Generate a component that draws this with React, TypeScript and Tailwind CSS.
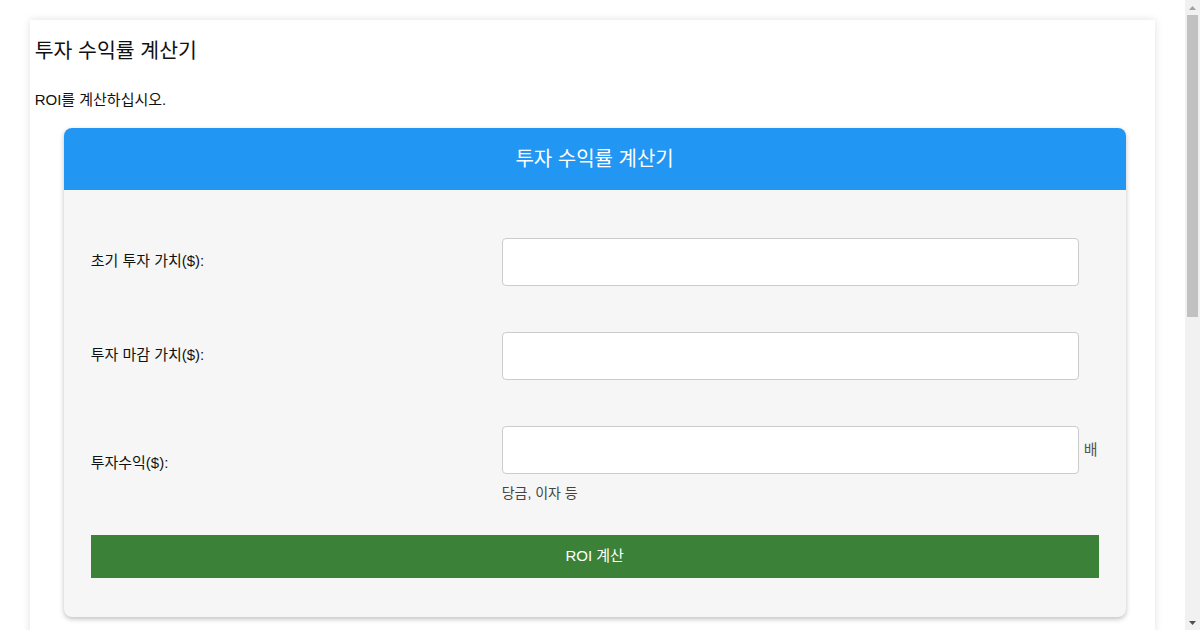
import React from "react";

const font = { fontFamily: '"Liberation Sans", "Noto Sans CJK KR", sans-serif' };

function Row({ label, suffix, help }: { label: string; suffix?: string; help?: string }) {
  return (
    <div className="flex items-center py-[23px]">
      <div className="w-[411px] shrink-0 -mt-[2px] text-[15px] text-[#111]">{label}</div>
      <div className="flex flex-col">
        <div className="flex items-center">
          <input
            type="text"
            className="w-[577px] h-[48px] bg-white border border-[#ccc] rounded-[4px] outline-none px-3"
          />
          {suffix && <span className="ml-[5px] text-[15px] text-[#555]">{suffix}</span>}
        </div>
        {help && <div className="mt-[9px] text-[14px] leading-[20px] text-[#444]">{help}</div>}
      </div>
    </div>
  );
}

function Scrollbar() {
  return (
    <div className="fixed right-0 top-0 w-[15px] h-[630px] bg-[#f1f1f1] flex flex-col items-center">
      <div className="h-[15px] flex items-center justify-center">
        <svg width="7" height="4" viewBox="0 0 7 4">
          <path d="M3.5 0 L7 4 L0 4 Z" fill="#a3a3a3" />
        </svg>
      </div>
      <div className="w-[11px] h-[302px] bg-[#c1c1c1]" />
      <div className="flex-1" />
      <div className="h-[15px] flex items-center justify-center">
        <svg width="7" height="4" viewBox="0 0 7 4">
          <path d="M0 0 L7 0 L3.5 4 Z" fill="#505050" />
        </svg>
      </div>
    </div>
  );
}

export default function App() {
  return (
    <div style={font} className="bg-white">
      <div className="w-[1185px] min-h-[1250px] pt-[20px] pb-[20px]">
        <div className="w-[95%] mx-auto bg-white shadow-[0_0_8px_rgba(0,0,0,0.12)] px-[5px] pt-[5px] min-h-[1200px]">
          <h2 className="mt-[14px] text-[20.5px] leading-[24px] text-[#111]">투자 수익률 계산기</h2>
          <p className="mt-[27px] text-[15px] leading-[20px] text-[#111]">ROI를 계산하십시오.</p>
          <div className="ml-[29px] mt-[18px] w-[1062px] rounded-[8px] overflow-hidden bg-[#f6f6f6] shadow-[0_2px_5px_rgba(0,0,0,0.25)]">
            <div className="h-[62px] bg-[#2196f3] flex items-center justify-center text-white text-[20px]">
              투자 수익률 계산기
            </div>
            <div className="px-[27px] pt-[25px] pb-[39px]">
              <Row label="초기 투자 가치($):" />
              <Row label="투자 마감 가치($):" />
              <Row label="투자수익($):" suffix="배" help="당금, 이자 등" />
              <button className="mt-[9px] w-full h-[43px] bg-[#3b8238] text-white text-[15px]">ROI 계산</button>
            </div>
          </div>
        </div>
      </div>
      <Scrollbar />
    </div>
  );
}
